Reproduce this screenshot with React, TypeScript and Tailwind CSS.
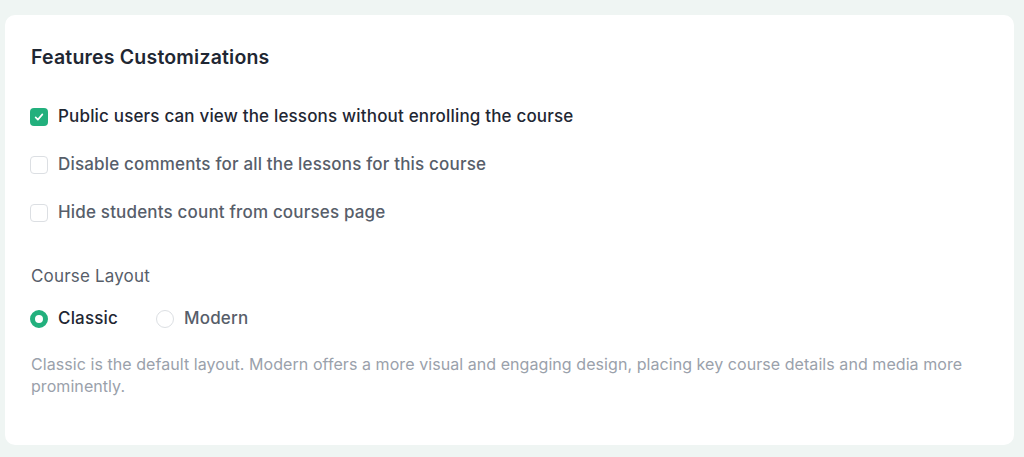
import { useState } from "react";

const featureOptions = [
  { id: "public", label: "Public users can view the lessons without enrolling the course" },
  { id: "comments", label: "Disable comments for all the lessons for this course" },
  { id: "students", label: "Hide students count from courses page" },
];

function CheckIcon() {
  return (
    <svg viewBox="0 0 16 16" className="size-3" fill="none" aria-hidden>
      <path
        d="M3.5 8.5 6.5 11.5 12.5 4.5"
        stroke="white"
        strokeWidth="2.2"
        strokeLinecap="round"
        strokeLinejoin="round"
      />
    </svg>
  );
}

function FeatureCheckbox({
  label,
  checked,
  onToggle,
}: {
  label: string;
  checked: boolean;
  onToggle: () => void;
}) {
  return (
    <button type="button" onClick={onToggle} className="flex h-6 items-center gap-2.5 text-left">
      <span
        className={
          checked
            ? "flex size-[18px] items-center justify-center rounded-[4px] bg-[#22b07d]"
            : "flex size-[18px] items-center justify-center rounded-[4px] border border-[#dcdfe3] bg-white"
        }
      >
        {checked && <CheckIcon />}
      </span>
      <span
        className={
          checked
            ? "text-[17px] font-medium tracking-[0.01em] text-[#1f2733]"
            : "text-[17px] font-medium tracking-[0.01em] text-[#575e6a]"
        }
      >
        {label}
      </span>
    </button>
  );
}

function LayoutRadio({
  label,
  selected,
  onSelect,
}: {
  label: string;
  selected: boolean;
  onSelect: () => void;
}) {
  return (
    <button type="button" onClick={onSelect} className="flex h-6 items-center gap-2.5">
      <span
        className={
          selected
            ? "size-[18px] rounded-full border-[5px] border-[#22b07d] bg-white"
            : "size-[18px] rounded-full border border-[#dcdfe3] bg-white"
        }
      />
      <span
        className={
          selected
            ? "text-[17px] font-medium tracking-[0.01em] text-[#1f2733]"
            : "text-[17px] font-medium tracking-[0.01em] text-[#575e6a]"
        }
      >
        {label}
      </span>
    </button>
  );
}

export default function App() {
  const [checked, setChecked] = useState<Record<string, boolean>>({ public: true });
  const [layout, setLayout] = useState<"classic" | "modern">("classic");

  return (
    <div className="min-h-[457px] bg-[#eff5f3] pt-[15px] pr-[10px] pl-[5px] font-['Inter',sans-serif]">
      <div className="rounded-[10px] bg-white pt-[28px] pr-[26px] pb-[48px] pl-[25px]">
        <h2 className="pl-px text-[19.5px] leading-7 font-semibold tracking-[0.01em] text-[#1f2733]">
          Features Customizations
        </h2>

        <div className="mt-[34px] flex flex-col gap-6">
          {featureOptions.map((opt) => (
            <FeatureCheckbox
              key={opt.id}
              label={opt.label}
              checked={!!checked[opt.id]}
              onToggle={() => setChecked({ ...checked, [opt.id]: !checked[opt.id] })}
            />
          ))}
        </div>

        <p className="mt-[39px] pl-px text-[17px] leading-6 tracking-[0.01em] text-[#575e6a]">
          Course Layout
        </p>

        <div className="mt-[19px] flex items-center gap-[38px]">
          <LayoutRadio label="Classic" selected={layout === "classic"} onSelect={() => setLayout("classic")} />
          <LayoutRadio label="Modern" selected={layout === "modern"} onSelect={() => setLayout("modern")} />
        </div>

        <p className="mt-[22px] pl-px text-[16px] leading-[22px] tracking-[0.004em] text-[#9aa1ab]">
          Classic is the default layout. Modern offers a more visual and engaging design, placing key
          course details and media more prominently.
        </p>
      </div>
    </div>
  );
}
